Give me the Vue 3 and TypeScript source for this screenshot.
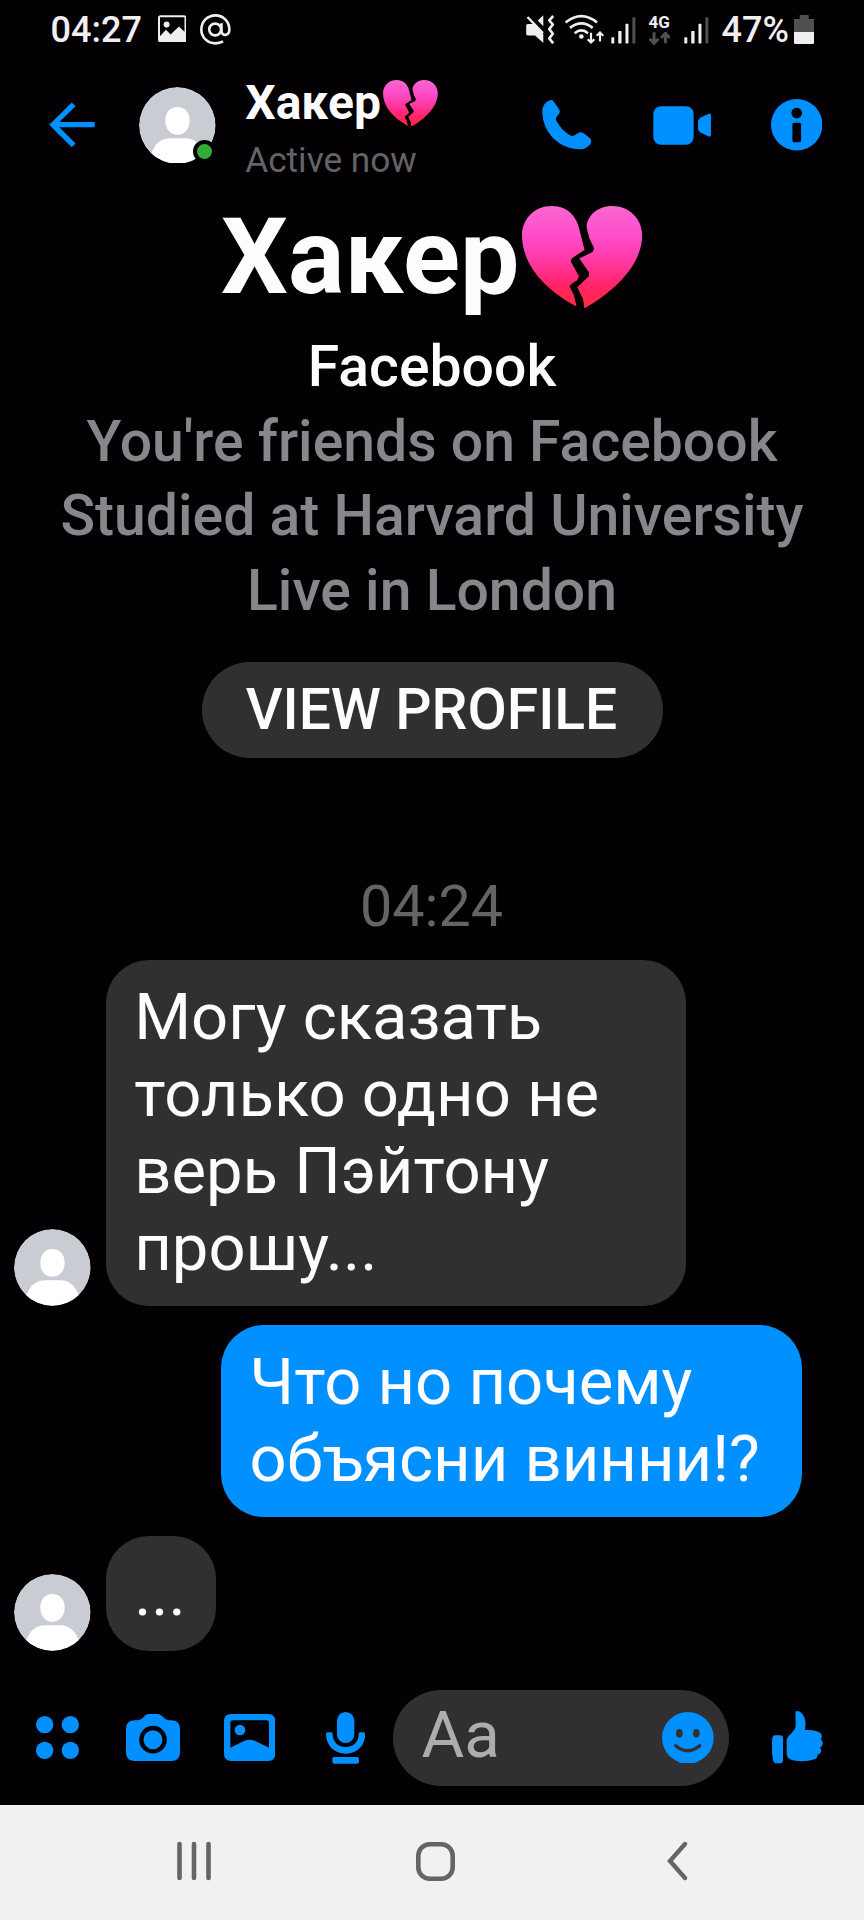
<script setup lang="ts">
interface Message {
  id: number
  own: boolean
  lines: string[]
}

const contact = 'Хакер'
const details: string[] = [
  "You're friends on Facebook",
  'Studied at Harvard University',
  'Live in London',
]
const messages: Message[] = [
  { id: 1, own: false, lines: ['Могу сказать', 'только одно не', 'верь Пэйтону', 'прошу...'] },
  { id: 2, own: true, lines: ['Что но почему', 'объясни винни!?'] },
  { id: 3, own: false, lines: ['...'] },
]
</script>

<template>
  <div class="phone">
    <!-- Shared shapes -->
    <svg class="defs" width="0" height="0" aria-hidden="true">
      <defs>
        <linearGradient id="heartFill" x1="0" y1="0" x2="0" y2="1">
          <stop offset="0" stop-color="#fb66d0" />
          <stop offset="0.3" stop-color="#ff4ccb" />
          <stop offset="0.55" stop-color="#ff38a0" />
          <stop offset="0.78" stop-color="#ff2468" />
          <stop offset="1" stop-color="#ff2a3c" />
        </linearGradient>
        <clipPath id="avatarClip"><circle cx="115" cy="115" r="115" /></clipPath>
        <symbol id="heart" viewBox="0 0 362 308">
          <g fill="url(#heartFill)">
            <path d="M90 0C36 0 0 40 0 88C0 178 70 252 164 302L156 268L143 243C144 236 157 228 166 223L171 211L146 165L150 157L188 132L176 86C168 34 140 0 90 0Z" />
            <path d="M270 0C226 0 196 30 194 62L202 96L217 128L212 138L172 158L201 199V211L166 244L184 282L187 308C286 252 361 172 361 88C361 40 324 0 270 0Z" />
          </g>
        </symbol>
        <symbol id="avatar" viewBox="0 0 230 230">
          <g clip-path="url(#avatarClip)">
            <circle cx="115" cy="115" r="115" fill="#caccd4" />
            <path d="M115 60C137 60 152 76 152 101C152 126 136 143 115 143C94 143 79 126 79 101C79 76 93 60 115 60Z" fill="#fff" />
            <path d="M36 202C48 169 66 154 94 154H138C166 154 184 172 196 202L180 240H50Z" fill="#fff" />
          </g>
        </symbol>
        <symbol id="signal" viewBox="538 46 76 84">
          <g fill="#f0eef1">
            <rect x="539" y="110" width="9" height="19" rx="2" />
            <rect x="560" y="91" width="10" height="38" rx="2" />
            <rect x="582" y="69" width="9" height="60" rx="2" />
          </g>
          <rect x="603" y="49" width="9" height="80" rx="2" fill="#505052" />
        </symbol>
      </defs>
    </svg>

    <div class="status">
      <span class="clock">04:27</span>
      <svg class="s-picture" viewBox="473 44 86 82">
        <path fill="#f0eef1" fill-rule="evenodd" d="M481 44H551Q559 44 559 52V118Q559 126 551 126H481Q473 126 473 118V52Q473 44 481 44ZM479 50V108L497 88L511 102L536 78L553 94V50Z" />
        <circle cx="499" cy="72" r="9" fill="#f0eef1" />
      </svg>
      <svg class="s-at" viewBox="599 40 94 94" fill="none" stroke="#f0eef1" stroke-width="8">
        <circle cx="645" cy="87" r="18" />
        <path d="M664 68V91C664 108 688 108 688 87C688 62 669 44 646 44C622 44 603 63 603 87C603 111 622 129 646 129C655 129 662 127 669 123" />
      </svg>

      <div class="status-right">
        <svg class="s-mute" viewBox="284 42 87 88">
          <path d="M289 69H306L336 100V127L311 104H289Q284 104 284 98V74Q284 69 289 69ZM319 59L336 43V76Z" fill="#f0eef1" />
          <path d="M288 48L335 97" stroke="#f0eef1" stroke-width="7" />
          <path d="M366 45L354 58L365 71L354 85L365 99L354 113L366 128" fill="none" stroke="#f0eef1" stroke-width="8" stroke-linejoin="round" />
        </svg>
        <svg class="s-wifi" viewBox="400 40 117 92" fill="none" stroke="#f0eef1">
          <path d="M402 65Q449 27 496 65M415 81Q449 54 483 81M429 97Q449 80 469 97" stroke-width="8" />
          <circle cx="449" cy="107" r="7" fill="#f0eef1" stroke="none" />
          <path d="M478 96V126M468 115L478 125L488 115M505 122V93M495 105L505 95L515 105" stroke-width="6.500" />
        </svg>
        <svg class="s-signal"><use href="#signal" /></svg>
        <div class="network">
          <span>4G</span>
          <svg viewBox="653 97 64 39" fill="none" stroke="#505052" stroke-width="9">
            <path d="M668 98V132M655 117L668 131L681 117M702 131V101M689 115L702 101L715 115" />
          </svg>
        </div>
        <svg class="s-signal"><use href="#signal" /></svg>
        <span class="percent">47%</span>
        <svg class="s-battery" viewBox="1086 43 60 87">
          <path d="M1103 43H1130V55H1146V94H1086V55H1103Z" fill="#505052" />
          <path d="M1086 94H1146V126Q1146 130 1142 130H1090Q1086 130 1086 126Z" fill="#f0eef1" />
        </svg>
      </div>
    </div>

    <header class="header">
      <svg class="back" viewBox="148 306 138 136" fill="none" stroke="#0090ff" stroke-width="16">
        <path d="M285 374H160M222 313L160 374L222 436" />
      </svg>
      <div class="presence">
        <svg class="avatar"><use href="#avatar" /></svg>
        <span class="online"></span>
      </div>
      <div class="who">
        <div class="name">{{ contact }}<svg class="heart-small" role="img" aria-label="broken heart"><use href="#heart" /></svg></div>
        <div class="active">Active now</div>
      </div>
      <div class="actions">
        <svg class="call" viewBox="329 299 149 149" fill="#0090ff">
          <path d="M350 301C337 307 330 318 330 333C330 396 380 447 443 447C458 447 470 439 476 427C478 421 476 416 472 413L454 399C448 395 442 395 437 398L427 405C422 408 417 407 413 405C396 395 382 380 373 363C370 357 370 353 373 349L380 340C383 335 383 331 380 327L365 305C361 299 356 298 350 301Z" />
        </svg>
        <svg class="video" viewBox="665 316 175 117" fill="#0090ff">
          <rect x="666" y="317" width="121" height="115" rx="23" />
          <path d="M831 340Q839 336 839 345V402Q839 411 831 407L812 398Q800 393 800 382V365Q800 354 811 349Z" />
        </svg>
        <svg class="info" viewBox="1017 297 154 154">
          <circle cx="1094" cy="374" r="77" fill="#0090ff" />
          <circle cx="1094" cy="339" r="16" />
          <rect x="1081" y="368" width="26" height="58" rx="5" />
        </svg>
      </div>
    </header>

    <main class="thread">
      <section class="profile">
        <h1 class="title">{{ contact }}<svg class="heart-large" role="img" aria-label="broken heart"><use href="#heart" /></svg></h1>
        <p class="line strong">Facebook</p>
        <p v-for="detail in details" :key="detail" class="line">{{ detail }}</p>
        <button class="view" type="button">VIEW PROFILE</button>
      </section>

      <time class="stamp">04:24</time>

      <div class="messages">
        <div v-for="message in messages" :key="message.id" class="row" :class="{ own: message.own }">
          <svg v-if="!message.own" class="avatar"><use href="#avatar" /></svg>
          <div class="bubble" :class="{ short: message.lines[0].length < 4 }">
            <div v-for="line in message.lines" :key="line">{{ line }}</div>
          </div>
        </div>
      </div>
    </main>

    <footer class="composer">
      <svg class="c-apps" viewBox="108 138 129 129" fill="#0090ff">
        <circle cx="134" cy="164" r="26" />
        <circle cx="211" cy="164" r="26" />
        <circle cx="134" cy="241" r="26" />
        <circle cx="211" cy="241" r="26" />
      </svg>
      <svg class="c-camera" viewBox="380 132 162 141">
        <path fill="#0090ff" d="M449 132H474C481 132 487 136 492 142C497 148 503 151 510 151H516Q542 151 542 177V247Q542 273 516 273H406Q380 273 380 247V177Q380 151 406 151H413C421 151 427 148 432 142C437 136 442 132 449 132Z" />
        <circle cx="461" cy="209" r="35" fill="#0090ff" stroke="#020003" stroke-width="13" />
      </svg>
      <svg class="c-image" viewBox="672 132 154 141" fill="#0090ff">
        <path fill-rule="evenodd" d="M694 132H804Q826 132 826 154V251Q826 273 804 273H694Q672 273 672 251V154Q672 132 694 132ZM698 151Q691 151 691 158V233L732 213Q749 205 766 213L807 233V158Q807 151 800 151Z" />
        <circle cx="720" cy="180" r="16" />
      </svg>
      <svg class="c-mic" viewBox="978 125 118 156" fill="#0090ff">
        <rect x="1011" y="125" width="52" height="93" rx="26" />
        <path d="M978 191Q978 186 983 186H993Q998 186 998 191C998 215 1014 230 1037 230C1060 230 1076 215 1076 191Q1076 186 1081 186H1091Q1096 186 1096 191C1096 226 1071 250 1037 250C1003 250 978 226 978 191Z" />
        <rect x="997" y="260" width="80" height="20" rx="6" />
      </svg>
      <div class="field">
        <span>Aa</span>
        <svg class="c-smile" viewBox="849 125 155 155">
          <circle cx="926.500" cy="202.500" r="77.500" fill="#0090ff" />
          <ellipse cx="901" cy="189" rx="10" ry="13" fill="#312f32" />
          <ellipse cx="952" cy="189" rx="10" ry="13" fill="#312f32" />
          <path d="M890 226Q926 256 962 226" fill="none" stroke="#312f32" stroke-width="10" stroke-linecap="round" />
        </svg>
      </div>
      <svg class="c-like" viewBox="1175 125 153 158" fill="#0090ff">
        <path d="M1184 198H1199Q1208 198 1208 207V273Q1208 282 1199 282H1190Q1180 282 1178 272Q1173 241 1176 207Q1177 198 1184 198Z" />
        <path d="M1245 131C1245 124 1254 124 1260 128C1275 140 1278 158 1274 182Q1294 181 1310 186Q1322 190 1324 198Q1326 205 1321 210Q1329 216 1327 224Q1326 232 1319 236Q1325 242 1322 248Q1319 254 1312 256Q1312 266 1303 270Q1272 280 1237 273Q1219 269 1219 252V216C1219 203 1226 200 1234 191C1243 181 1246 178 1246 164Z" />
      </svg>
    </footer>

    <nav class="system">
      <svg class="n-recent" viewBox="0 0 36 40" stroke="#666467" stroke-width="4.600" stroke-linecap="round">
        <path d="M3.500 3V37M18 3V37M32.500 3V37" />
      </svg>
      <svg class="n-home" viewBox="0 0 39 39" fill="none" stroke="#666467" stroke-width="4.600">
        <rect x="2.300" y="2.300" width="34.400" height="34.400" rx="11.500" />
      </svg>
      <svg class="n-back" viewBox="0 0 22 40" fill="none" stroke="#666467" stroke-width="4.400" stroke-linecap="round">
        <path d="M19 3L4 20L19 37" />
      </svg>
    </nav>
  </div>
</template>

<style>
body {
  margin: 0;
  background: #020003;
}
</style>

<style scoped>
.phone {
  width: 864px;
  height: 1920px;
  display: flex;
  flex-direction: column;
  overflow: hidden;
  background: #020003;
  color: #fefcff;
  font-family: Roboto, "Noto Sans", sans-serif;
}
svg {
  display: block;
  flex: none;
}
.defs {
  position: absolute;
}

/* Status bar */
.status {
  height: 60px;
  flex: none;
  box-sizing: border-box;
  padding: 0 50px 0 50.500px;
  display: flex;
  align-items: center;
  color: #f0eef1;
}
.clock,
.percent {
  font-size: 36px;
  font-weight: 500;
  line-height: 60px;
}
.clock {
  width: 107px;
}
.s-picture {
  width: 28.500px;
  height: 27.500px;
  margin-bottom: 3px;
}
.s-at {
  width: 31px;
  height: 31px;
  margin: 0 0 2px 13.500px;
}
.status-right {
  margin-left: auto;
  display: flex;
  align-items: center;
}
.s-mute {
  width: 29px;
  height: 29px;
  margin: 0 10px 2px 0;
}
.s-wifi {
  width: 39px;
  height: 31px;
  margin: 0 7px 2px 0;
}
.s-signal {
  width: 25px;
  height: 28px;
}
.network {
  width: 22px;
  margin: 0 13px;
}
.network span {
  display: block;
  height: 16px;
  font-size: 17px;
  font-weight: 700;
  line-height: 15px;
}
.network svg {
  width: 21.500px;
  height: 13px;
  margin-top: 1px;
}
.percent {
  margin: 0 5px 0 13px;
}
.s-battery {
  width: 20px;
  height: 29px;
  margin-bottom: 2px;
}

/* Conversation header */
.header {
  height: 130px;
  flex: none;
  box-sizing: border-box;
  padding: 0 42px 0 49px;
  display: flex;
  align-items: center;
}
.back {
  width: 46px;
  height: 45.300px;
}
.avatar {
  width: 76.700px;
  height: 76.700px;
}
.presence {
  position: relative;
  margin: 0 29.500px 0 44px;
}
.online {
  position: absolute;
  right: -0.500px;
  bottom: 0.500px;
  width: 15px;
  height: 15px;
  border: 4.500px solid #020003;
  border-radius: 50%;
  background: #32ac35;
}
.who {
  padding-top: 5px;
}
.name {
  display: flex;
  align-items: center;
  height: 56px;
  font-size: 48px;
  font-weight: 700;
  line-height: 56px;
}
.heart-small {
  width: 55px;
  height: 46.800px;
  margin-left: 2px;
}
.active {
  margin-top: 9px;
  font-size: 35.200px;
  line-height: 40px;
  color: #656366;
}
.actions {
  margin-left: auto;
  display: flex;
  align-items: center;
}
.call {
  width: 49.700px;
  height: 49.700px;
}
.video {
  width: 58.300px;
  height: 39px;
  margin: 0 59px 0 62px;
}
.info {
  width: 51.500px;
  height: 51.500px;
}

/* Profile summary */
.thread {
  flex: 1;
}
.profile {
  display: flex;
  flex-direction: column;
  align-items: center;
  padding-top: 5px;
}
.title {
  margin: 0 0 11px;
  display: flex;
  font-size: 105.500px;
  font-weight: 700;
  line-height: 124px;
}
.heart-large {
  width: 120.500px;
  height: 102.500px;
  margin: 10.500px 0 0 3px;
}
.line {
  margin: 0;
  font-size: 57.100px;
  font-weight: 500;
  line-height: 74.500px;
  color: #88868a;
  white-space: nowrap;
}
.line.strong {
  color: #fefcff;
}
.view {
  width: 461px;
  height: 96px;
  margin: 34px 0 0;
  padding: 0 1px 0 0;
  border: 0;
  border-radius: 48px;
  background: #312f32;
  color: #fefcff;
  font: 500 57px / 96px Roboto, "Noto Sans", sans-serif;
}
.stamp {
  display: block;
  margin-top: 112px;
  padding-right: 1px;
  text-align: center;
  font-size: 57.500px;
  line-height: 74px;
  color: #656366;
}

/* Messages */
.messages {
  display: flex;
  flex-direction: column;
  gap: 19.500px;
  margin-top: 16px;
  padding: 0 62.500px 0 14.300px;
}
.row {
  display: flex;
  align-items: flex-end;
  gap: 14.700px;
}
.row.own {
  justify-content: flex-end;
}
.bubble {
  width: 580.500px;
  box-sizing: border-box;
  padding: 18.800px 28.500px;
  border-radius: 43px;
  background: #312f32;
  font-size: 65.200px;
  line-height: 77px;
  white-space: nowrap;
}
.bubble.short {
  width: 110px;
}
.own .bubble {
  background: #0090ff;
}

/* Composer */
.composer {
  height: 134px;
  flex: none;
  box-sizing: border-box;
  padding: 0 41.500px 0 36px;
  display: flex;
  align-items: center;
}
.c-apps {
  width: 43px;
  height: 43px;
}
.c-camera {
  width: 54px;
  height: 47px;
  margin-left: 47px;
}
.c-image {
  width: 51.300px;
  height: 47px;
  margin-left: 44px;
}
.c-mic {
  width: 39.300px;
  height: 52px;
  margin-left: 50.500px;
}
.field {
  width: 335.500px;
  height: 96px;
  box-sizing: border-box;
  margin: 0 auto 0 28px;
  padding: 0 14.500px 0 28.500px;
  border-radius: 48px;
  background: #312f32;
  display: flex;
  align-items: center;
  justify-content: space-between;
}
.field span {
  font-size: 65.500px;
  line-height: 92px;
  padding-bottom: 6px;
  color: #aeacaf;
}
.c-smile {
  width: 51.700px;
  height: 51.700px;
}
.c-like {
  width: 51px;
  height: 52.700px;
}

/* System navigation */
.system {
  height: 115.500px;
  flex: none;
  box-sizing: border-box;
  padding: 0 0 2px 175.500px;
  display: flex;
  align-items: center;
  background: #f3f0f4;
}
.n-recent {
  width: 36px;
  height: 40px;
}
.n-home {
  width: 39px;
  height: 39px;
  margin-left: 204px;
}
.n-back {
  width: 22px;
  height: 40px;
  margin-left: 211.500px;
}
</style>
